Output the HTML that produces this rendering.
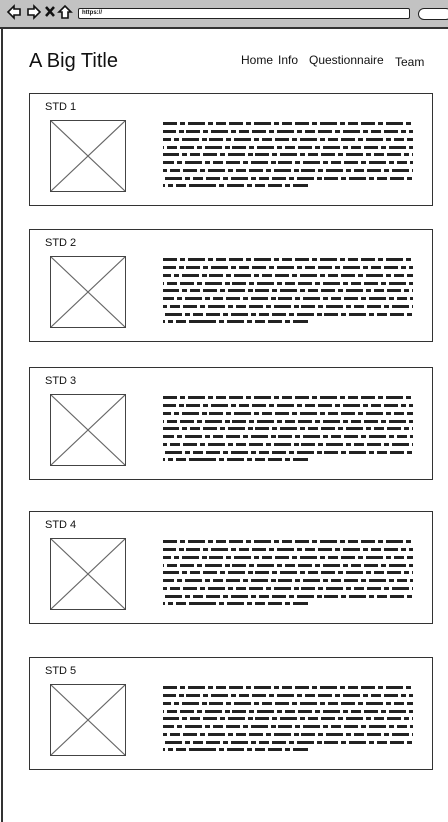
<!DOCTYPE html>
<html><head><meta charset="utf-8"><style>
*{margin:0;padding:0;box-sizing:border-box}
body{width:448px;height:822px;background:#fff;position:relative;overflow:hidden;font-family:"Liberation Sans",sans-serif;color:#111}
.bar{position:absolute;left:0;top:0;width:448px;height:29px;background:#c2c2c2;border-bottom:2px solid #333}
.lb{position:absolute;left:1px;top:29px;width:2px;height:793px;background:#333}
.url{position:absolute;left:78px;top:8px;width:332px;height:11px;background:#fff;border:1.5px solid #222;border-radius:2px;font-size:6px;line-height:8px;padding-left:3px;font-weight:bold}
.srch{position:absolute;left:418px;top:8px;width:34px;height:12px;background:#fff;border:1.5px solid #222;border-radius:6px}
.title{position:absolute;left:29px;top:50px;font-size:20px}
.nav{position:absolute;top:53px;font-size:12px}
.card{position:absolute;left:29px;width:404px;height:113px;border:1.3px solid #333}
.card .h{position:absolute;left:15px;top:7px;font-size:11px}
.img{position:absolute;left:20px;top:26px;width:76px;height:72px;border:1.3px solid #444}
.txt{position:absolute;left:133px;top:28px;width:250px}
.ln{height:3px;background:repeating-linear-gradient(90deg,#222 0 14px,transparent 14px 17px,#222 17px 22px,transparent 22px 25px,#222 25px 42px,transparent 42px 45px,#222 45px 50px,transparent 50px 53px,#222 53px 63px,transparent 63px 66px)}
</style></head><body>
<div class="bar">
<svg style="position:absolute;left:6px;top:4px" width="70" height="16" viewBox="0 0 70 16" fill="#fff" stroke="#111" stroke-width="1.6">
<path d="M2 8 L8 2 V5 H14 V11 H8 V14 Z"/>
<path d="M34 8 L28 2 V5 H22 V11 H28 V14 Z"/>
<path d="M40 3 L48 12 M48 3 L40 12" stroke-width="2.5"/>
<path d="M53 8 L59 2 L65 8 H62 V14 H56 V8 Z"/>
</svg>
<div class="url">https://</div>
<div class="srch"></div>
</div>
<div class="lb"></div>
<div class="title">A Big Title</div>
<div class="nav" style="left:241px">Home</div>
<div class="nav" style="left:278px">Info</div>
<div class="nav" style="left:309px">Questionnaire</div>
<div class="nav" style="left:395px;top:55px">Team</div>

<div id="cards"></div>
<script>
var tops=[93,229,367,511,657],h='';
var img='<svg class="img" viewBox="0 0 76 72" preserveAspectRatio="none"><path d="M0 0L76 72M76 0L0 72" stroke="#666" stroke-width="1.2"/></svg>';
tops.forEach(function(t,i){
 var l='';for(var k=0;k<9;k++){l+='<div class="ln" style="margin-bottom:'+(k%4==3?4:5)+'px;background-position:'+(k*23)+'px 0;'+(k==8?'width:145px':'')+'"></div>';}
 h+='<div class="card" style="top:'+t+'px"><div class="h">STD '+(i+1)+'</div>'+img+'<div class="txt">'+l+'</div></div>';
});
document.getElementById('cards').innerHTML=h;
</script>
</body></html>
